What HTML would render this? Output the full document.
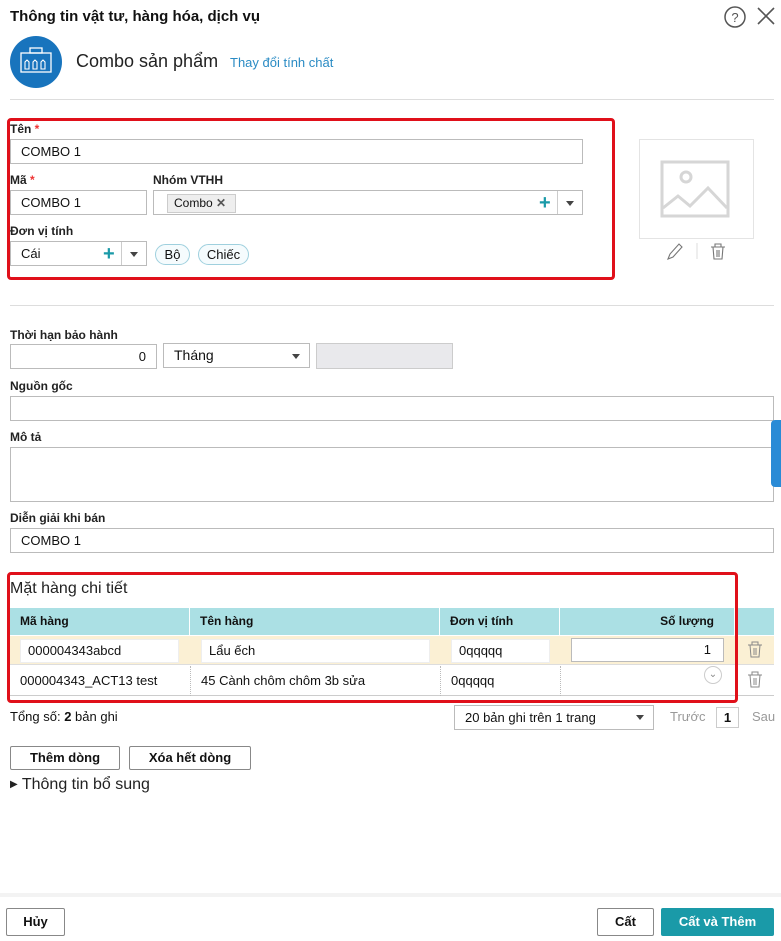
<!DOCTYPE html>
<html><head><meta charset="utf-8"><style>
*{box-sizing:border-box;margin:0;padding:0}
body{width:781px;height:941px;position:relative;background:#fff;font-family:"Liberation Sans",sans-serif;color:#111;font-size:13px;overflow:hidden}
.a{position:absolute}
.lbl{position:absolute;font-weight:bold;font-size:12px;color:#222}
.req{color:#e33}
.inp{position:absolute;border:1px solid #bbb;background:#fff;height:25px;line-height:23px;padding-left:10px;font-size:13px}
.pill{position:absolute;border:1px solid #9fd0de;border-radius:11px;height:21px;line-height:19px;text-align:center;font-size:13px;background:#f5fbfd}
.btn{position:absolute;border:1px solid #888;border-radius:2px;background:#fff;text-align:center;font-weight:bold;font-size:13px}
.th{position:absolute;top:608px;height:27px;line-height:27px;font-weight:bold;font-size:12px;border-right:1px solid #fff}
.cell{position:absolute;background:#fff;border:1px solid #eee;height:24px;line-height:22px;padding-left:7px;font-size:13px}
.plus{position:absolute;color:#1a9aa8;font-size:20px;font-weight:bold;line-height:20px}
.arr{position:absolute;width:0;height:0;border-left:4px solid transparent;border-right:4px solid transparent;border-top:5px solid #444}
</style></head><body>
<div class="a" style="left:10px;top:8px;font-size:15px;font-weight:bold">Thông tin vật tư, hàng hóa, dịch vụ</div>
<svg class="a" style="left:722px;top:5px" width="58" height="24"><circle cx="13" cy="12" r="10" fill="none" stroke="#555" stroke-width="1.5"/><text x="13" y="17" font-size="13" text-anchor="middle" fill="#555" font-family="Liberation Sans">?</text><path d="M36 3L52 19M52 3L36 19" stroke="#555" stroke-width="1.6"/></svg>
<svg class="a" style="left:10px;top:36px" width="52" height="52"><circle cx="26" cy="26" r="26" fill="#1874bd"/><rect x="11" y="17" width="30" height="19" fill="none" stroke="#fff" stroke-width="1.3"/><rect x="20" y="12" width="12" height="5" fill="none" stroke="#fff" stroke-width="1.3"/><path d="M15 33v-7l2-2 2 2v7zM23 33v-7l2-2 2 2v7zM31 33v-7l2-2 2 2v7z" fill="none" stroke="#fff" stroke-width="1.1"/></svg>
<div class="a" style="left:76px;top:51px;font-size:18px;color:#222">Combo sản phẩm</div>
<div class="a" style="left:230px;top:55px;font-size:13px;color:#2a8bc4">Thay đổi tính chất</div>
<div class="a" style="left:10px;top:99px;width:764px;height:1px;background:#ddd"></div>

<div class="a" style="left:7px;top:118px;width:608px;height:162px;border:3px solid #e0101a;border-radius:4px"></div>
<div class="lbl" style="left:10px;top:122px">Tên <span class="req">*</span></div>
<div class="inp" style="left:10px;top:139px;width:573px">COMBO 1</div>
<div class="lbl" style="left:10px;top:173px">Mã <span class="req">*</span></div>
<div class="inp" style="left:10px;top:190px;width:137px">COMBO 1</div>
<div class="lbl" style="left:153px;top:173px">Nhóm VTHH</div>
<div class="inp" style="left:153px;top:190px;width:430px"></div>
<div class="a" style="left:167px;top:194px;width:69px;height:19px;background:#eee;border:1px solid #ccc;font-size:12px;line-height:17px;padding-left:6px">Combo <span style="color:#555;font-weight:bold">✕</span></div>
<div class="plus" style="left:539px;top:193px">+</div>
<div class="a" style="left:557px;top:191px;width:1px;height:23px;background:#ccc"></div>
<div class="arr" style="left:566px;top:201px"></div>
<div class="lbl" style="left:10px;top:224px">Đơn vị tính</div>
<div class="inp" style="left:10px;top:241px;width:137px">Cái</div>
<div class="plus" style="left:103px;top:244px">+</div>
<div class="a" style="left:121px;top:242px;width:1px;height:23px;background:#ccc"></div>
<div class="arr" style="left:130px;top:252px"></div>
<div class="pill" style="left:155px;top:244px;width:35px">Bộ</div>
<div class="pill" style="left:198px;top:244px;width:51px">Chiếc</div>

<div class="a" style="left:639px;top:139px;width:115px;height:100px;border:1px solid #e4e4e4"></div>
<svg class="a" style="left:660px;top:160px" width="70" height="58"><rect x="2" y="2" width="66" height="54" fill="none" stroke="#d6d6d6" stroke-width="3"/><circle cx="26" cy="17" r="5" fill="none" stroke="#d6d6d6" stroke-width="3"/><path d="M3 48L18 36 30 46 48 28 67 48" fill="none" stroke="#d6d6d6" stroke-width="3"/></svg>
<svg class="a" style="left:664px;top:241px" width="64" height="22"><path d="M4 18l2-5 9-10 3 3-9 10z" fill="none" stroke="#777" stroke-width="1.1"/><line x1="33" y1="2" x2="33" y2="18" stroke="#ddd"/><path d="M47 6h14M51 6V3h6v3M49 6l1 12h8l1-12M53 9v7M55 9v7" fill="none" stroke="#777" stroke-width="1.1"/></svg>

<div class="a" style="left:10px;top:305px;width:764px;height:1px;background:#ddd"></div>
<div class="lbl" style="left:10px;top:328px">Thời hạn bảo hành</div>
<div class="inp" style="left:10px;top:344px;width:147px;text-align:right;padding-right:10px">0</div>
<div class="inp" style="left:163px;top:343px;width:147px;font-size:14px">Tháng</div>
<div class="arr" style="left:292px;top:354px"></div>
<div class="a" style="left:316px;top:343px;width:137px;height:26px;background:#e9e9ec;border:1px solid #ccc"></div>
<div class="lbl" style="left:10px;top:379px">Nguồn gốc</div>
<div class="inp" style="left:10px;top:396px;width:764px"></div>
<div class="lbl" style="left:10px;top:430px">Mô tả</div>
<div class="inp" style="left:10px;top:447px;width:764px;height:55px"></div>
<div class="a" style="left:771px;top:420px;width:12px;height:67px;background:#2a8bd6;border-radius:4px 0 0 4px"></div>
<div class="lbl" style="left:10px;top:511px">Diễn giải khi bán</div>
<div class="inp" style="left:10px;top:528px;width:764px">COMBO 1</div>

<div class="a" style="left:10px;top:580px;font-size:16px;color:#222">Mặt hàng chi tiết</div>
<div class="a" style="left:10px;top:608px;width:764px;height:27px;background:#abe0e4"></div>
<div class="th" style="left:10px;width:180px;padding-left:10px">Mã hàng</div>
<div class="th" style="left:190px;width:250px;padding-left:10px">Tên hàng</div>
<div class="th" style="left:440px;width:120px;padding-left:10px">Đơn vị tính</div>
<div class="th" style="left:560px;width:175px;text-align:right;padding-right:20px">Số lượng</div>
<div class="a" style="left:10px;top:636px;width:764px;height:29px;background:#fbf0d4;border-bottom:1px solid #ddd"></div>
<div class="cell" style="left:20px;top:639px;width:159px">000004343abcd</div>
<div class="cell" style="left:201px;top:639px;width:229px">Lẩu ếch</div>
<div class="cell" style="left:451px;top:639px;width:99px">0qqqqq</div>
<div class="cell" style="left:571px;top:638px;width:153px;text-align:right;padding-right:12px;border-color:#bbb">1</div>
<div class="a" style="left:10px;top:666px;width:764px;height:30px;border-bottom:1px solid #ccc"></div>
<div class="a" style="left:20px;top:673px">000004343_ACT13 test</div>
<div class="a" style="left:201px;top:673px">45 Cành chôm chôm 3b sửa</div>
<div class="a" style="left:451px;top:673px">0qqqqq</div>
<div class="a" style="left:190px;top:666px;border-left:1px dotted #bbb;height:30px"></div>
<div class="a" style="left:440px;top:666px;border-left:1px dotted #bbb;height:30px"></div>
<div class="a" style="left:560px;top:666px;border-left:1px dotted #bbb;height:30px"></div>
<div class="a" style="left:704px;top:666px;width:18px;height:18px;border-radius:9px;border:1px solid #ccc;background:#fff;color:#888;font-size:10px;text-align:center;line-height:16px">⌄</div>
<svg class="a" style="left:746px;top:640px" width="18" height="56"><path d="M2 5h14M6 5V2h6v3M4 5l1 12h8l1-12M8 8v7M10 8v7" fill="none" stroke="#888" stroke-width="1"/><path d="M2 35h14M6 35v-3h6v3M4 35l1 12h8l1-12M8 38v7M10 38v7" fill="none" stroke="#888" stroke-width="1"/></svg>
<div class="a" style="left:7px;top:572px;width:731px;height:131px;border:3px solid #e0101a;border-radius:4px"></div>

<div class="a" style="left:10px;top:709px">Tổng số: <b>2</b> bản ghi</div>
<div class="inp" style="left:454px;top:705px;width:200px">20 bản ghi trên 1 trang</div>
<div class="arr" style="left:636px;top:715px"></div>
<div class="a" style="left:670px;top:709px;color:#999">Trước</div>
<div class="a" style="left:716px;top:707px;width:23px;height:21px;border:1px solid #ccc;text-align:center;line-height:19px;font-weight:bold">1</div>
<div class="a" style="left:752px;top:709px;color:#999">Sau</div>

<div class="btn" style="left:10px;top:746px;width:110px;height:24px;line-height:22px">Thêm dòng</div>
<div class="btn" style="left:129px;top:746px;width:122px;height:24px;line-height:22px">Xóa hết dòng</div>
<div class="a" style="left:10px;top:776px;font-size:16px;color:#222"><span style="font-size:10px;vertical-align:2px">▶</span> Thông tin bổ sung</div>

<div class="a" style="left:0;top:893px;width:781px;height:4px;background:#f3f3f3"></div>
<div class="btn" style="left:6px;top:908px;width:59px;height:28px;line-height:26px">Hủy</div>
<div class="btn" style="left:597px;top:908px;width:57px;height:28px;line-height:26px">Cất</div>
<div class="a" style="left:661px;top:908px;width:113px;height:28px;line-height:28px;background:#1a9aa8;color:#fff;font-weight:bold;text-align:center;border-radius:2px">Cất và Thêm</div>
</body></html>
